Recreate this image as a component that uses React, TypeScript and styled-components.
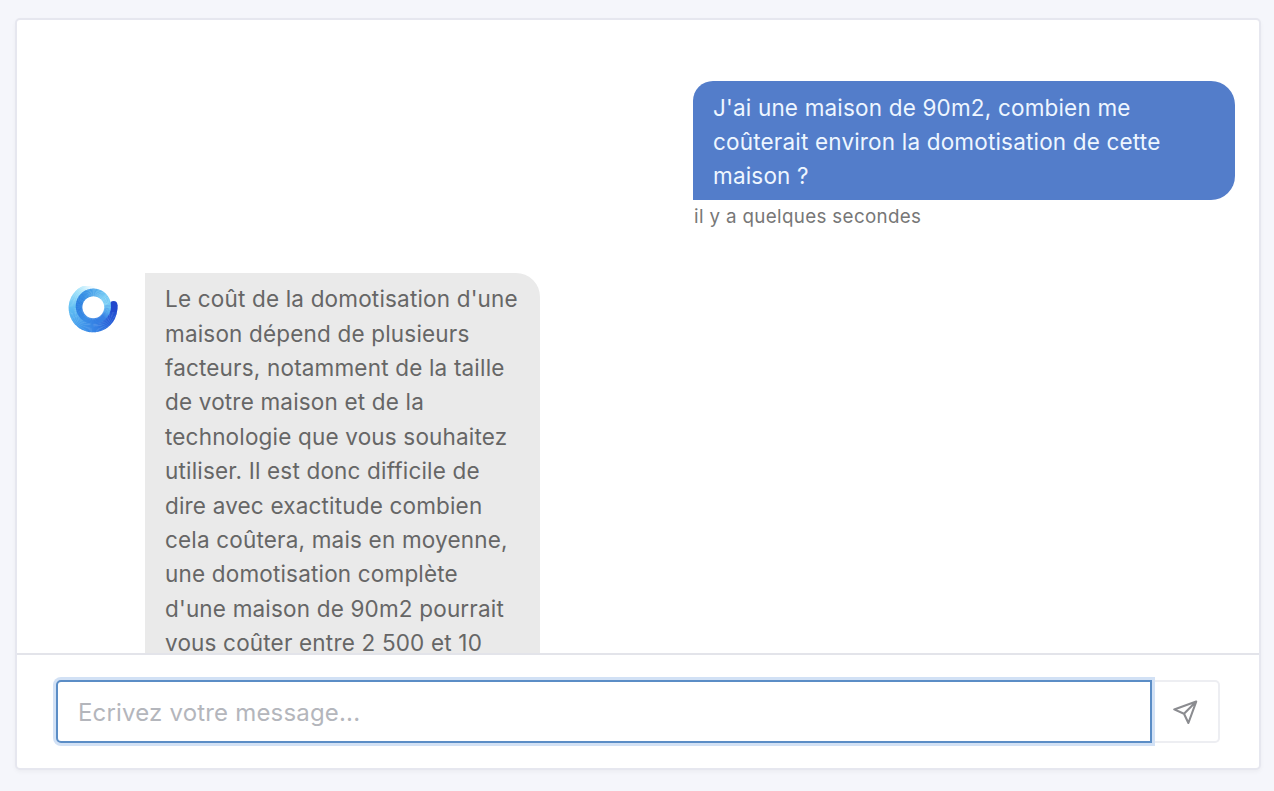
import React from "react";
import styled, { createGlobalStyle } from "styled-components";

const GlobalStyle = createGlobalStyle`
  *, *::before, *::after { box-sizing: border-box; }
  body {
    margin: 0;
    background: #f5f6fb;
    font-family: Inter, "Liberation Sans", sans-serif;
    -webkit-font-smoothing: antialiased;
  }
`;

const Page = styled.main`
  height: 791px;
  padding: 18px 13px 21px 15px;
  overflow: hidden;
`;

const Card = styled.section`
  height: 100%;
  display: flex;
  flex-direction: column;
  background: #fff;
  border: 2px solid #e6e7ef;
  border-radius: 5px;
  box-shadow: 0 2px 4px rgba(0, 0, 0, 0.04);
`;

const Messages = styled.div`
  flex: 1;
  min-height: 0;
  overflow: hidden;
  display: flex;
  flex-direction: column;
  padding: 61px 24px 0 51px;
`;

const OutgoingMessage = styled.div`
  align-self: flex-end;
  width: 542px;
`;

const Bubble = styled.div<{ $mine?: boolean }>`
  padding: ${(p) => (p.$mine ? "9.6px 20px 6.2px" : "9.2px 20px 40px")};
  width: ${(p) => (p.$mine ? "542px" : "395px")};
  border-radius: ${(p) => (p.$mine ? "20px 24px 24px 0" : "0 24px 24px 0")};
  background: ${(p) => (p.$mine ? "#537dca" : "#eaeaea")};
  color: ${(p) => (p.$mine ? "#eef6ff" : "#666")};
  font-size: 22.5px;
  line-height: 34.4px;
  letter-spacing: 0.18px;
  white-space: pre;
`;

const Timestamp = styled.div`
  color: #777;
  font-size: 18.8px;
  line-height: 28px;
  letter-spacing: 0.34px;
  padding: 2.5px 0 0 1px;
`;

const IncomingMessage = styled.div`
  flex: none;
  display: flex;
  align-items: flex-start;
  margin-top: 42.5px;
`;

const Avatar = styled.svg`
  flex: none;
  width: 52px;
  height: 48px;
  margin: 13px 25px 0 0;
`;

const Composer = styled.form`
  flex: none;
  display: flex;
  height: 115px;
  padding: 25px 39px 26px 39px;
  border-top: 2px solid #e3e4ea;
`;

const MessageInput = styled.input`
  flex: 1;
  min-width: 0;
  height: 63px;
  padding: 1px 20px 0;
  border: 2px solid #5b8dc6;
  border-radius: 5px 0 0 5px;
  box-shadow: 0 0 0 3px #d2e1f5;
  outline: none;
  background: #fff;
  color: #555;
  font: 24px Inter, "Liberation Sans", sans-serif;
  letter-spacing: 0.18px;
  z-index: 1;
  &::placeholder { color: #b4b6bc; opacity: 1; }
`;

const SendButton = styled.button`
  width: 68px;
  height: 63px;
  padding: 0;
  display: flex;
  align-items: center;
  justify-content: center;
  border: 2px solid #edeef2;
  border-left: 0;
  border-radius: 0 5px 5px 0;
  background: #fff;
`;

const question = `J'ai une maison de 90m2, combien me
coûterait environ la domotisation de cette
maison ?`;

const answer = `Le coût de la domotisation d'une
maison dépend de plusieurs
facteurs, notamment de la taille
de votre maison et de la
technologie que vous souhaitez
utiliser. Il est donc difficile de
dire avec exactitude combien
cela coûtera, mais en moyenne,
une domotisation complète
d'une maison de 90m2 pourrait
vous coûter entre 2 500 et 10`;

type Stop = [angle: number, r: number, g: number, b: number];

// Angles run clockwise from the right-hand side.
const outerStops: Stop[] = [
  [-12, 34, 72, 204],
  [30, 38, 90, 214],
  [75, 52, 126, 227],
  [120, 66, 152, 235],
  [180, 98, 192, 243],
  [225, 160, 226, 250],
  [262, 238, 250, 255],
  [275, 255, 255, 255],
];

const innerStops: Stop[] = [
  [-180, 42, 124, 223],
  [-135, 50, 138, 227],
  [-90, 74, 166, 234],
  [-45, 112, 200, 244],
  [-5, 118, 205, 246],
  [20, 90, 176, 240],
  [45, 58, 132, 228],
  [75, 52, 126, 227],
  [120, 58, 142, 231],
  [150, 48, 130, 226],
  [180, 42, 124, 223],
];

function colorAt(stops: Stop[], angle: number) {
  const i = Math.max(1, stops.findIndex((s) => s[0] >= angle));
  const a = stops[i - 1];
  const b = stops[i];
  const t = (angle - a[0]) / (b[0] - a[0]);
  const mix = (k: 1 | 2 | 3) => Math.round(a[k] + (b[k] - a[k]) * t);
  return `rgb(${mix(1)}, ${mix(2)}, ${mix(3)})`;
}

function SweepRing(props: { cx: number; cy: number; r: number; width: number; stops: Stop[] }) {
  const { cx, cy, r, width, stops } = props;
  const first = stops[0][0];
  const last = stops[stops.length - 1][0];
  const point = (deg: number) => {
    const rad = (deg * Math.PI) / 180;
    return `${(cx + r * Math.cos(rad)).toFixed(2)} ${(cy + r * Math.sin(rad)).toFixed(2)}`;
  };
  const arcs = [];
  for (let a = first; a < last; a += 3) {
    arcs.push(
      <path
        key={a}
        d={`M${point(a)}A${r} ${r} 0 0 1 ${point(Math.min(a + 4, last))}`}
        stroke={colorAt(stops, a)}
        strokeWidth={width}
        fill="none"
      />
    );
  }
  return <g>{arcs}</g>;
}

function AssistantLogo() {
  return (
    <Avatar viewBox="0 0 52 48" aria-hidden="true">
      <SweepRing cx={25} cy={22} r={18} width={12.6} stops={outerStops} />
      <circle cx="45.6" cy="18.8" r="3.8" fill="#2248cc" />
      <path d="M49.4 18.8Q49.8 22 48.8 26L42 26L42 18.8Z" fill="#2249cd" />
      <SweepRing cx={25.4} cy={20.2} r={13.6} width={8} stops={innerStops} />
      <circle cx="25.3" cy="21.3" r="10.9" fill="#fff" />
    </Avatar>
  );
}

function SendIcon() {
  return (
    <svg width="28" height="28" viewBox="0 0 28 28" fill="none" stroke="#8b8c90" strokeWidth="2.1" strokeLinejoin="round">
      <path d="M25.2 3.6L3.2 11.4L13 15.8L17.4 25ZM13 15.8L25.2 3.6" />
    </svg>
  );
}

export default function App() {
  return (
    <>
      <GlobalStyle />
      <Page>
        <Card>
          <Messages>
            <OutgoingMessage>
              <Bubble $mine>{question}</Bubble>
              <Timestamp>il y a quelques secondes</Timestamp>
            </OutgoingMessage>
            <IncomingMessage>
              <AssistantLogo />
              <Bubble>{answer}</Bubble>
            </IncomingMessage>
          </Messages>
          <Composer onSubmit={(e) => e.preventDefault()}>
            <MessageInput placeholder="Ecrivez votre message..." />
            <SendButton aria-label="Envoyer">
              <SendIcon />
            </SendButton>
          </Composer>
        </Card>
      </Page>
    </>
  );
}
